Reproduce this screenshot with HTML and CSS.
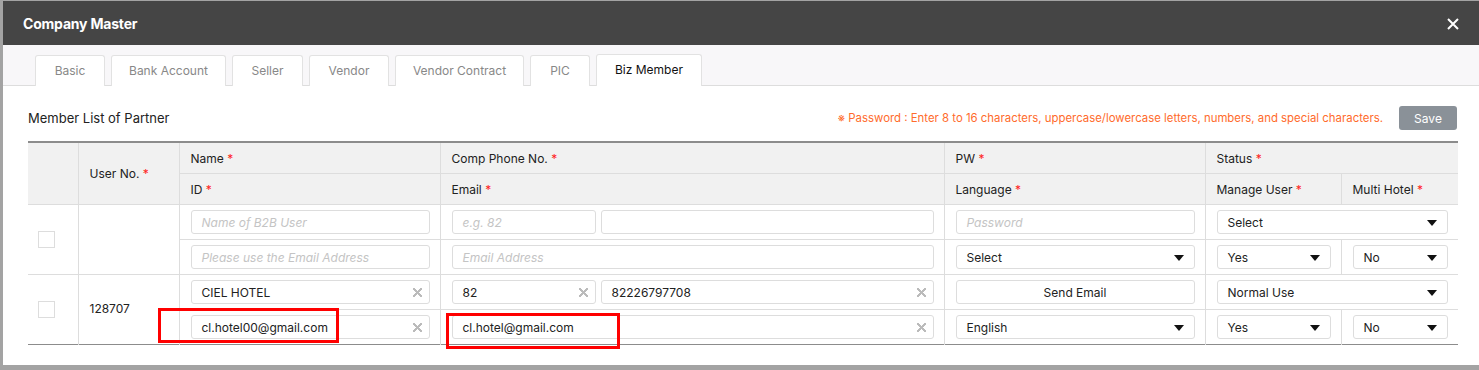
FILE: index.html
```html
<!DOCTYPE html>
<html lang="en">
<head>
    <meta charset="UTF-8">
    <title>Company Master</title>
    <link rel="stylesheet" href="styles.css">
</head>
<body>
<div class="modal">
    <div class="modal-head">
        <h1>Company Master</h1>
        <svg class="close" width="12" height="12" viewBox="0 0 12 12"><path d="M1 1L11 11M11 1L1 11" stroke="#fff" stroke-width="2"/></svg>
    </div>

    <div class="tabs">
        <div class="tab">Basic</div>
        <div class="tab">Bank Account</div>
        <div class="tab">Seller</div>
        <div class="tab">Vendor</div>
        <div class="tab">Vendor Contract</div>
        <div class="tab">PIC</div>
        <div class="tab active">Biz Member</div>
    </div>

    <div class="content">
        <div class="toolbar">
            <h2>Member List of Partner</h2>
            <span class="note">※ Password : Enter 8 to 16 characters, uppercase/lowercase letters, numbers, and special characters.</span>
            <button class="save">Save</button>
        </div>

        <table class="grid">
            <colgroup>
                <col style="width:50px"><col style="width:101px"><col style="width:261px"><col style="width:504px"><col style="width:261px"><col style="width:136px"><col style="width:117px">
            </colgroup>
            <thead>
            <tr>
                <th rowspan="2"></th>
                <th rowspan="2">User No. <i>*</i></th>
                <th>Name <i>*</i></th>
                <th>Comp Phone No. <i>*</i></th>
                <th>PW <i>*</i></th>
                <th colspan="2">Status <i>*</i></th>
            </tr>
            <tr class="sub">
                <th>ID <i>*</i></th>
                <th>Email <i>*</i></th>
                <th>Language <i>*</i></th>
                <th>Manage User <i>*</i></th>
                <th>Multi Hotel <i>*</i></th>
            </tr>
            </thead>
            <tbody>
            <tr>
                <td rowspan="2" class="chk"><span class="box"></span></td>
                <td rowspan="2"></td>
                <td><div class="field ph">Name of B2B User</div></td>
                <td><div class="pair"><div class="field ph code">e.g. 82</div><div class="field"></div></div></td>
                <td><div class="field ph">Password</div></td>
                <td colspan="2"><div class="field sel">Select</div></td>
            </tr>
            <tr>
                <td><div class="field ph">Please use the Email Address</div></td>
                <td><div class="field ph">Email Address</div></td>
                <td><div class="field sel">Select</div></td>
                <td><div class="field sel">Yes</div></td>
                <td><div class="field sel">No</div></td>
            </tr>
            <tr>
                <td rowspan="2" class="chk"><span class="box"></span></td>
                <td rowspan="2" class="num">128707</td>
                <td><div class="field clr">CIEL HOTEL</div></td>
                <td><div class="pair"><div class="field clr code">82</div><div class="field clr">82226797708</div></div></td>
                <td><div class="field btn">Send Email</div></td>
                <td colspan="2"><div class="field sel">Normal Use</div></td>
            </tr>
            <tr>
                <td><div class="field clr">cl.hotel00@gmail.com</div></td>
                <td><div class="field clr">cl.hotel@gmail.com</div></td>
                <td><div class="field sel">English</div></td>
                <td><div class="field sel">Yes</div></td>
                <td><div class="field sel">No</div></td>
            </tr>
            </tbody>
        </table>

        <div class="mark mark-id"></div>
        <div class="mark mark-mail"></div>
    </div>
</div>
</body>
</html>
```

FILE: styles.css
```css
body {
    margin: 0;
    padding: 1px 0 0 3px;
    background: #a3a3a3;
    font-family: Inter, "Noto Sans", sans-serif;
    color: #222;
}

.modal {
    background: #fff;
    height: 364px;
}

.modal-head {
    height: 44px;
    background: #454545;
    display: flex;
    align-items: center;
    justify-content: space-between;
    padding: 0 20px 0 20px;
}

.modal-head h1 {
    margin: 0;
    color: #fff;
    font-size: 14px;
    font-weight: 700;
    letter-spacing: -0.2px;
}

.close {
    margin-top: 1px;
}

.tabs {
    height: 41px;
    box-sizing: border-box;
    background: #f8f7f9;
    border-bottom: 1px solid #ddd;
    display: flex;
    align-items: flex-end;
    gap: 6px;
    padding-left: 32px;
}

.tab {
    height: 31px;
    box-sizing: border-box;
    border: 1px solid #e2e2e2;
    border-bottom: none;
    border-radius: 3px 3px 0 0;
    background: #fff;
    color: #888;
    font-size: 12px;
    display: flex;
    align-items: center;
    justify-content: center;
    margin-bottom: -1px;
    padding-bottom: 2px;
}

.tab:nth-child(1) { width: 70px; }
.tab:nth-child(2) { width: 115px; }
.tab:nth-child(3) { width: 71px; }
.tab:nth-child(4) { width: 80px; }
.tab:nth-child(5) { width: 129px; }
.tab:nth-child(6) { width: 60px; }
.tab:nth-child(7) { width: 106px; height: 32px; }

.tab.active {
    color: #111;
}

.content {
    position: relative;
    padding: 20px 21px 0 25px;
}

.toolbar {
    display: flex;
    align-items: center;
    height: 24px;
    margin-bottom: 11px;
}

.toolbar h2 {
    margin: 0;
    font-size: 13px;
    font-weight: 400;
    color: #222;
    flex: 1;
}

.note {
    color: #ff6b2c;
    font-size: 11.4px;
    margin-right: 16px;
}

.save {
    width: 58px;
    height: 24px;
    border: none;
    border-radius: 3px;
    background: #8a9198;
    color: #fff;
    font-family: inherit;
    font-size: 12px;
    margin-right: 1px;
}

.grid {
    border-collapse: collapse;
    table-layout: fixed;
    width: 1430px;
    font-size: 12px;
    border-top: 2px solid #8c8c8c;
    border-bottom: 1px solid #8c8c8c;
}

.grid th {
    background: #f1f1f1;
    font-weight: 400;
    text-align: left;
    height: 30px;
    padding: 0 11px;
    border: 1px solid #ddd;
    border-top: none;
    color: #222;
}

.grid thead tr:first-child th {
    height: 30px;
}

.grid th:first-child,
.grid td.chk {
    border-left: none;
}

.grid th:last-child,
.grid tr td:last-child {
    border-right: none;
}

.grid th i {
    font-style: normal;
    color: #f22;
}

.grid td {
    border: 1px solid #ddd;
    padding: 5px 10px 5px 11px;
    height: 24px;
}

.grid tbody tr:last-child td,
.grid tbody tr:nth-child(3) td.chk,
.grid tbody tr:nth-child(3) td.num {
    border-bottom: none;
}

.grid td.chk {
    padding-left: 10px;
}

.grid td.num {
    font-size: 12px;
    color: #222;
    padding-bottom: 8px;
}

.box {
    display: block;
    width: 17px;
    height: 17px;
    box-sizing: border-box;
    border: 1px solid #ddd;
    background: #fff;
}

.pair {
    display: flex;
    gap: 5px;
}

.pair .code {
    width: 144px;
    flex: none;
}

.pair .field:last-child {
    flex: 1;
}

.field {
    position: relative;
    height: 24px;
    box-sizing: border-box;
    border: 1px solid #ddd;
    border-radius: 3px;
    padding: 0 10px;
    display: flex;
    align-items: center;
    font-size: 12px;
    color: #222;
    background: #fff;
}

.field.ph {
    color: #c4c4c4;
    font-style: italic;
}

.field.clr::after {
    content: "";
    position: absolute;
    right: 7px;
    top: 7px;
    width: 9px;
    height: 9px;
    background:
        linear-gradient(45deg, transparent 43%, #bbb 43%, #bbb 57%, transparent 57%),
        linear-gradient(-45deg, transparent 43%, #bbb 43%, #bbb 57%, transparent 57%);
}

.field.sel::after {
    content: "";
    position: absolute;
    right: 10px;
    top: 9px;
    border-left: 5px solid transparent;
    border-right: 5px solid transparent;
    border-top: 6px solid #111;
}

.field.btn {
    justify-content: center;
}

.mark {
    position: absolute;
    border: 3px solid #f00;
    box-sizing: border-box;
}

.mark-id {
    left: 155px;
    top: 222px;
    width: 181px;
    height: 35px;
}

.mark-mail {
    left: 443px;
    top: 227px;
    width: 174px;
    height: 36px;
}
```
